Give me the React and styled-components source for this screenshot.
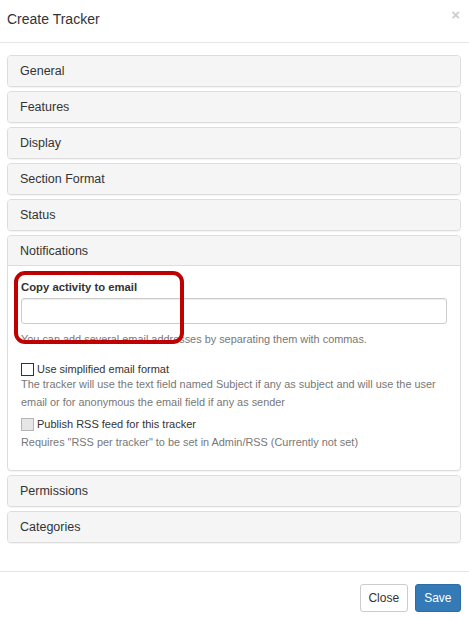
import React from 'react'
import styled, { createGlobalStyle } from 'styled-components'

const GlobalStyle = createGlobalStyle`
  html, body {
    margin: 0;
    padding: 0;
    background: #fff;
  }
  body {
    font-family: "Liberation Sans", Arial, Helvetica, sans-serif;
    color: #333;
  }
  * {
    box-sizing: border-box;
  }
`

const Modal = styled.div`
  width: 469px;
  height: 621px;
  background: #fff;
  display: flex;
  flex-direction: column;
`

const Header = styled.div`
  height: 43px;
  padding: 10px 9px 0 7px;
  border-bottom: 1px solid #e5e5e5;
  display: flex;
  justify-content: space-between;
  align-items: flex-start;
`

const Title = styled.h4`
  margin: 0;
  font-size: 14px;
  line-height: 18px;
  font-weight: 400;
  color: #333;
`

const CloseX = styled.span`
  font-size: 15px;
  line-height: 10px;
  font-weight: 700;
  color: #000;
  opacity: 0.2;
`

const Body = styled.div`
  padding: 12px 8px 27px 7px;
  display: flex;
  flex-direction: column;
  gap: 4px;
`

const Panel = styled.div`
  border: 1px solid #ddd;
  border-radius: 4px;
  background: #fff;
  box-shadow: 0 1px 1px rgba(0, 0, 0, 0.05);
`

const PanelHeading = styled.div`
  height: 30px;
  padding: 0 12px;
  display: flex;
  align-items: center;
  background: #f5f5f5;
  font-size: 12.5px;
  color: #333;
  border-radius: ${p => (p.$open ? '3px 3px 0 0' : '3px')};
  border-bottom: ${p => (p.$open ? '1px solid #ddd' : 'none')};
`

const PanelBody = styled.div`
  position: relative;
  padding: 13px 13px 19px 13px;
  display: flex;
  flex-direction: column;
`

const Label = styled.label`
  font-size: 11.3px;
  line-height: 16px;
  font-weight: 700;
  color: #333;
`

const Input = styled.div`
  margin-top: 3px;
  height: 26px;
  border: 1px solid #ccc;
  border-radius: 3px;
  box-shadow: inset 0 1px 1px rgba(0, 0, 0, 0.075);
`

const Help = styled.div`
  font-size: 10.9px;
  line-height: ${p => p.$lh || '18px'};
  color: #777;
  margin-top: ${p => p.$mt || '0px'};
`

const CheckRow = styled.div`
  display: flex;
  align-items: center;
  gap: 3px;
  height: 14px;
  margin-top: ${p => p.$mt || '0px'};
  font-size: 11px;
  color: #333;
`

const Box = styled.span`
  width: 13px;
  height: 13px;
  flex: none;
  border: 1px solid ${p => (p.$disabled ? '#b5b5b5' : '#333')};
  background: ${p => (p.$disabled ? '#e6e6e6' : '#fff')};
  display: inline-block;
`

const Highlight = styled.div`
  position: absolute;
  left: 6px;
  top: 5px;
  width: 170px;
  height: 73px;
  border: 4px solid #c00000;
  border-radius: 11px;
  pointer-events: none;
`

const Spacer = styled.div`
  flex: 1;
`

const Footer = styled.div`
  border-top: 1px solid #e5e5e5;
  padding: 12px 8px 9px 0;
  display: flex;
  justify-content: flex-end;
  gap: 7px;
`

const Button = styled.button`
  height: 28px;
  padding: 0 ${p => p.$px || '8px'};
  font-family: "Liberation Sans", Arial, sans-serif;
  font-size: 12px;
  border-radius: 3px;
  border: 1px solid ${p => (p.$primary ? '#2e6da4' : '#ccc')};
  background: ${p => (p.$primary ? '#337ab7' : '#fff')};
  color: ${p => (p.$primary ? '#fff' : '#333')};
  cursor: pointer;
`

const sections = ['General', 'Features', 'Display', 'Section Format', 'Status']

const App = () => {
  return (
    <>
      <GlobalStyle />
      <Modal>
        <Header>
          <Title>Create Tracker</Title>
          <CloseX>×</CloseX>
        </Header>
        <Body>
          {sections.map(s => (
            <Panel key={s}>
              <PanelHeading>{s}</PanelHeading>
            </Panel>
          ))}
          <Panel>
            <PanelHeading $open>Notifications</PanelHeading>
            <PanelBody>
              <Label>Copy activity to email</Label>
              <Input />
              <Help $lh="16px" $mt="7px">
                You can add several email addresses by separating them with commas.
              </Help>
              <CheckRow $mt="15px">
                <Box />
                Use simplified email format
              </CheckRow>
              <Help $mt="-1px">
                The tracker will use the text field named Subject if any as subject and will use the user
                email or for anonymous the email field if any as sender
              </Help>
              <CheckRow $mt="6px">
                <Box $disabled />
                Publish RSS feed for this tracker
              </CheckRow>
              <Help $mt="2px">Requires "RSS per tracker" to be set in Admin/RSS (Currently not set)</Help>
              <Highlight />
            </PanelBody>
          </Panel>
          <Panel>
            <PanelHeading>Permissions</PanelHeading>
          </Panel>
          <Panel>
            <PanelHeading>Categories</PanelHeading>
          </Panel>
        </Body>
        <Spacer />
        <Footer>
          <Button $px="7.5px">Close</Button>
          <Button $primary $px="8.5px">Save</Button>
        </Footer>
      </Modal>
    </>
  )
}

export default App
